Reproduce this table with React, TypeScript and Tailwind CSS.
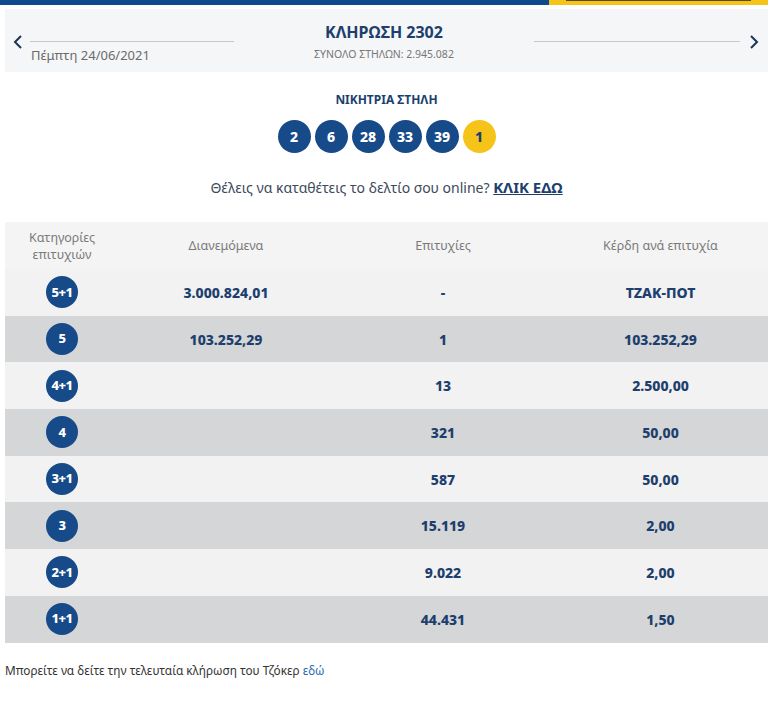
import React from "react";

const numbers = [2, 6, 28, 33, 39];
const joker = 1;

const rows = [
  { cat: "5+1", dist: "3.000.824,01", wins: "-", prize: "ΤΖΑΚ-ΠΟΤ" },
  { cat: "5", dist: "103.252,29", wins: "1", prize: "103.252,29" },
  { cat: "4+1", dist: "", wins: "13", prize: "2.500,00" },
  { cat: "4", dist: "", wins: "321", prize: "50,00" },
  { cat: "3+1", dist: "", wins: "587", prize: "50,00" },
  { cat: "3", dist: "", wins: "15.119", prize: "2,00" },
  { cat: "2+1", dist: "", wins: "9.022", prize: "2,00" },
  { cat: "1+1", dist: "", wins: "44.431", prize: "1,50" },
];

const Chevron = ({ dir }: { dir: "left" | "right" }) => (
  <svg width="10" height="14" viewBox="0 0 10 14" className="text-[#1d3557]">
    <polyline
      points={dir === "left" ? "8,1 2,7 8,13" : "2,1 8,7 2,13"}
      fill="none"
      stroke="currentColor"
      strokeWidth="2"
    />
  </svg>
);

const App: React.FC = () => {
  return (
    <div className="w-[783px] min-h-[720px] bg-white font-['Noto_Sans',sans-serif] text-[#333]">
      {/* top strip */}
      <div className="flex h-[5px] w-[768px]">
        <div className="w-[549px] bg-[#0f4a8c]" />
        <div className="flex-1 bg-[#f6c319] px-[17px]">
          <div className="h-[1px] bg-[#5a4a1a]" />
        </div>
      </div>

      {/* draw header */}
      <div className="mt-[4px] ml-[5px] flex h-[63px] w-[763px] bg-[#f5f6f7]">
        <div className="flex w-[25px] items-start justify-center pt-[26px]">
          <Chevron dir="left" />
        </div>
        <div className="w-[204px] pt-[32px]">
          <div className="h-px bg-[#c8c8c8]" />
          <div className="mt-[4px] pl-px text-[13px] leading-[18px] text-[#6b6b6b]">Πέμπτη 24/06/2021</div>
        </div>
        <div className="flex w-[300px] flex-col items-center pt-[12px]">
          <div className="text-[16px] font-bold leading-[22px] text-[#1d3f6e]">ΚΛΗΡΩΣΗ 2302</div>
          <div className="mt-[4px] text-[10.5px] leading-[14px] text-[#777]">ΣΥΝΟΛΟ ΣΤΗΛΩΝ: 2.945.082</div>
        </div>
        <div className="w-[206px] pt-[32px]">
          <div className="h-px bg-[#c8c8c8]" />
        </div>
        <div className="flex flex-1 items-start justify-center pt-[26px]">
          <Chevron dir="right" />
        </div>
      </div>

      {/* winning numbers */}
      <div className="w-[773px] pt-[20px] text-center">
        <div className="text-[12px] font-bold leading-[16px] text-[#1d3f6e]">ΝΙΚΗΤΡΙΑ ΣΤΗΛΗ</div>
        <div className="mt-[12px] flex justify-center gap-[4px]">
          {numbers.map((n) => (
            <div
              key={n}
              className="flex h-[33px] w-[33px] items-center justify-center rounded-full bg-[#174a89] text-[14px] font-extrabold text-white"
            >
              {n}
            </div>
          ))}
          <div className="flex h-[33px] w-[33px] items-center justify-center rounded-full bg-[#f6c319] text-[14px] font-extrabold text-[#1d3f6e]">
            {joker}
          </div>
        </div>
        <div className="mt-[24px] text-[14px] leading-[20px] text-[#3d4a5c]">
          Θέλεις να καταθέτεις το δελτίο σου online?{" "}
          <a className="text-[15px] font-bold text-[#1d3f6e] underline">ΚΛΙΚ ΕΔΩ</a>
        </div>
      </div>

      {/* prize table */}
      <div className="mt-[24px] ml-[5px] w-[763px]">
        <div className="grid h-[47px] grid-cols-[114px_214px_220px_1fr] items-center bg-[#f4f4f4] text-center text-[12.5px] leading-[17px] text-[#7a7a7a]">
          <div>
            Κατηγορίες
            <br />
            επιτυχιών
          </div>
          <div>Διανεμόμενα</div>
          <div>Επιτυχίες</div>
          <div>Κέρδη ανά επιτυχία</div>
        </div>
        {rows.map((r, i) => (
          <div
            key={r.cat}
            className={
              "grid h-[46.7px] grid-cols-[114px_214px_220px_1fr] items-center text-center text-[14px] font-extrabold text-[#1d3f6e] " +
              (i % 2 === 0 ? "bg-[#f2f2f2]" : "bg-[#d5d6d7]")
            }
          >
            <div className="flex justify-center">
              <div className="flex h-[32px] w-[32px] items-center justify-center rounded-full bg-[#174a89] text-[13px] tracking-[-0.5px] text-white">
                {r.cat}
              </div>
            </div>
            <div>{r.dist}</div>
            <div>{r.wins}</div>
            <div>{r.prize}</div>
          </div>
        ))}
      </div>

      <div className="mt-[18px] ml-[5px] text-[11.8px] leading-[18px] text-[#333]">
        Μπορείτε να δείτε την τελευταία κλήρωση του Τζόκερ <a className="text-[#2a6bb5]">εδώ</a>
      </div>
    </div>
  );
};

export default App;
